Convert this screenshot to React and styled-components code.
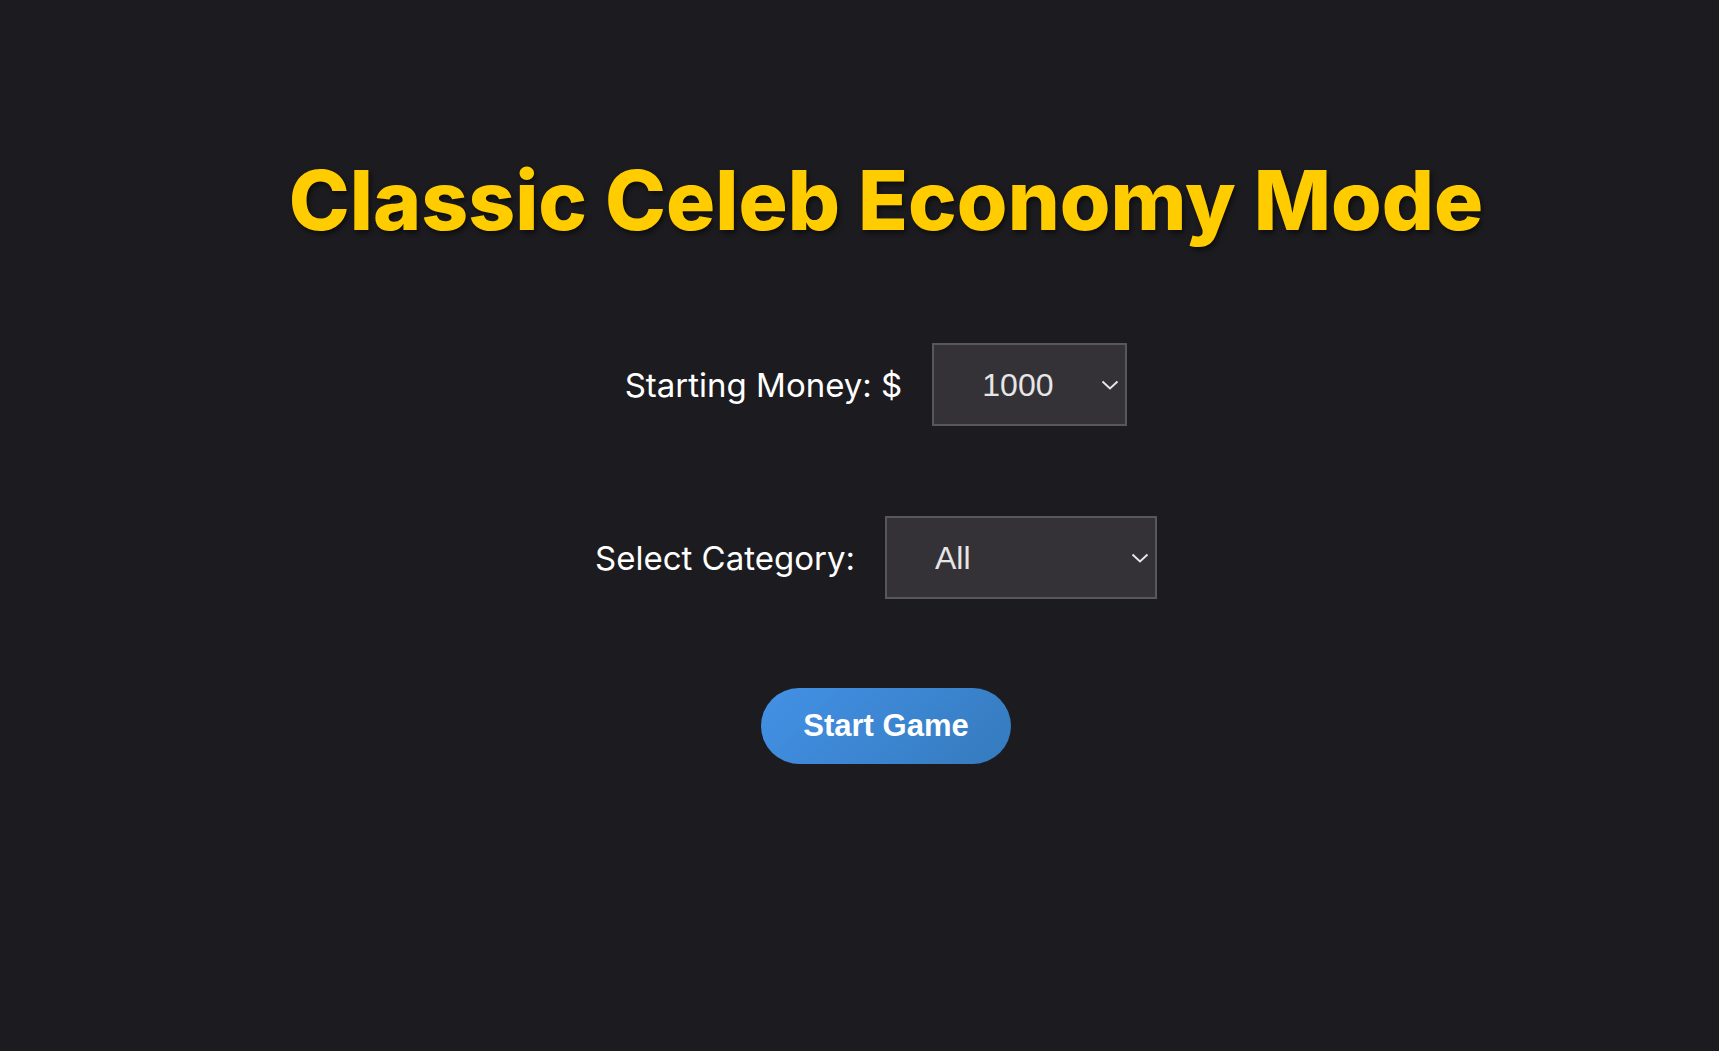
import React from 'react';
import styled, { createGlobalStyle } from 'styled-components';

const GlobalStyle = createGlobalStyle`
  body {
    margin: 0;
    background-color: #1c1b1f;
    font-family: 'Inter', 'Liberation Sans', sans-serif;
  }
`;

const Page = styled.div`
  min-height: 100vh;
  box-sizing: border-box;
  padding: 152px 0 0 53px;
  display: flex;
  flex-direction: column;
  align-items: center;
`;

const Title = styled.h1`
  margin: 0 0 93px;
  font-family: 'Inter', sans-serif;
  font-size: 82px;
  line-height: 1.2;
  font-weight: 800;
  color: #ffcc00;
  text-shadow: 2px 3px 5px rgba(0, 0, 0, 0.55);
`;

const Form = styled.div`
  display: flex;
  flex-direction: column;
  align-items: center;
  gap: 90px;
`;

const Row = styled.div`
  display: flex;
  align-items: center;
  gap: 30px;
  padding-right: 20px;
`;

const Label = styled.label`
  font-family: 'Inter', sans-serif;
  font-size: 33px;
  font-weight: 400;
  color: #ffffff;
`;

const SelectWrap = styled.div`
  position: relative;
  width: ${props => props.width}px;
`;

const Select = styled.select`
  appearance: none;
  width: 100%;
  height: 83px;
  box-sizing: border-box;
  padding: 0 40px 0 48px;
  border: 2px solid #58575b;
  border-radius: 0;
  background-color: #343236;
  color: #e6e6e6;
  font-family: 'Liberation Sans', Arial, sans-serif;
  font-size: 32px;
  outline: none;
`;

const Chevron = styled.svg`
  position: absolute;
  right: 8px;
  top: 50%;
  margin-top: -5px;
  pointer-events: none;
`;

const StartButton = styled.button`
  margin-top: 89px;
  width: 250px;
  height: 76px;
  border: none;
  border-radius: 38px;
  background: linear-gradient(135deg, #4391e6, #357abd);
  color: #ffffff;
  font-family: 'Liberation Sans', Arial, sans-serif;
  font-size: 31px;
  font-weight: bold;
  cursor: pointer;
`;

const Dropdown = ({ width, value, options }) => (
  <SelectWrap width={width}>
    <Select defaultValue={value}>
      {options.map(opt => (
        <option key={opt} value={opt}>{opt}</option>
      ))}
    </Select>
    <Chevron width="18" height="10" viewBox="0 0 18 10">
      <polyline points="1.5,1.5 9,8.5 16.5,1.5" fill="none" stroke="#e6e6e6" strokeWidth="2" />
    </Chevron>
  </SelectWrap>
);

const App = () => {
  return (
    <Page>
      <GlobalStyle />
      <Title>Classic Celeb Economy Mode</Title>
      <Form>
        <Row>
          <Label>Starting Money: $</Label>
          <Dropdown width={195} value="1000" options={['500', '1000', '2000', '5000']} />
        </Row>
        <Row>
          <Label>Select Category:</Label>
          <Dropdown width={272} value="All" options={['All', 'Actors', 'Musicians', 'Athletes']} />
        </Row>
      </Form>
      <StartButton>Start Game</StartButton>
    </Page>
  );
};

export default App;
